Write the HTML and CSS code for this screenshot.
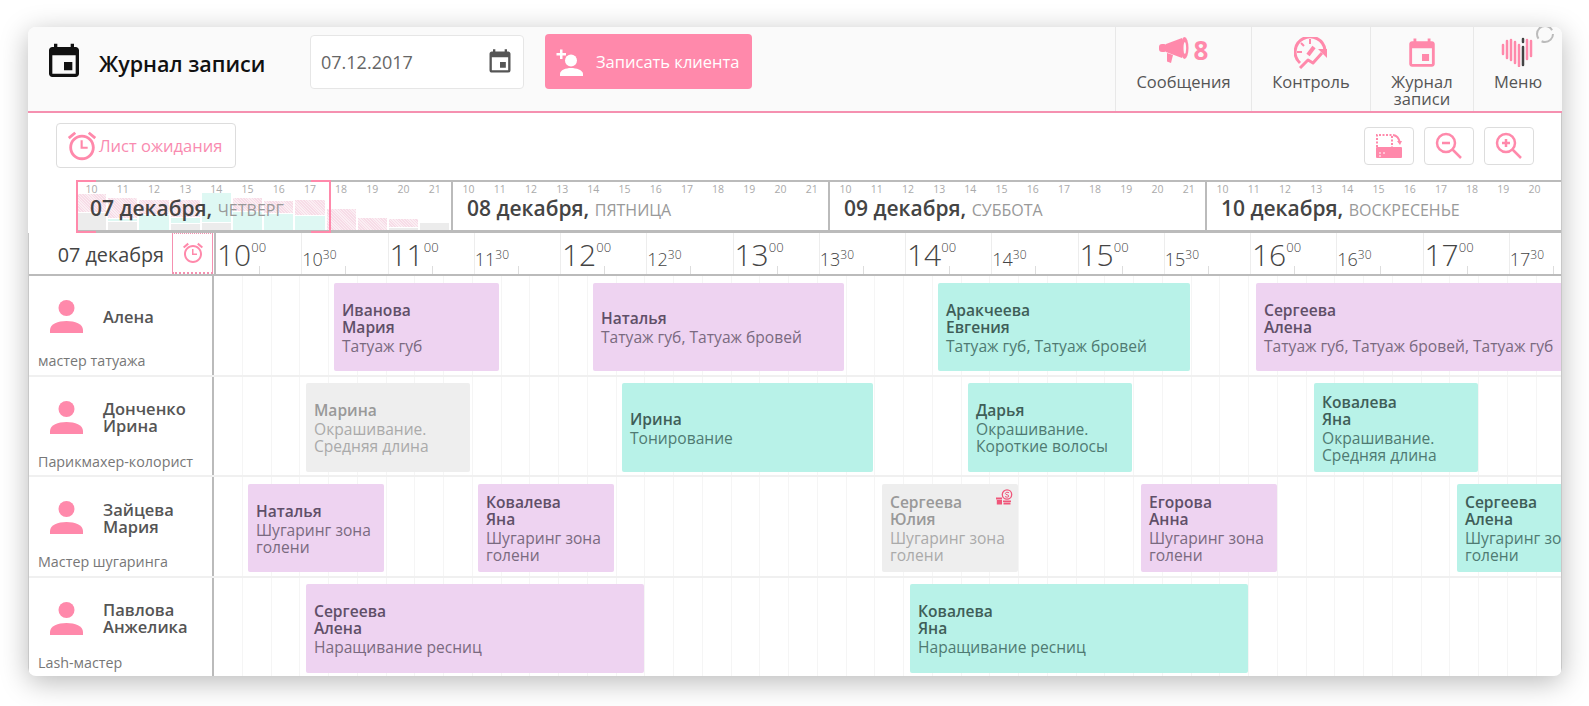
FILE: index.html
```html
<!DOCTYPE html>
<html lang="ru">
<head>
    <meta charset="UTF-8">
    <title>Журнал записи</title>
    <link rel="stylesheet" href="styles.css">
</head>
<body>
<svg class="icon-defs" width="0" height="0">
    <symbol id="i-event" viewBox="0 0 24 24"><path d="M17 12h-5v5h5v-5zM16 1v2H8V1H6v2H5c-1.11 0-1.99.9-1.99 2L3 19c0 1.1.89 2 2 2h14c1.1 0 2-.9 2-2V5c0-1.1-.9-2-2-2h-1V1h-2zm3 18H5V8h14v11z"/></symbol>
    <symbol id="i-alarm" viewBox="0 0 24 24"><path d="M22 5.72l-4.6-3.86-1.29 1.53 4.6 3.86L22 5.72zM7.88 3.39L6.6 1.86 2 5.71l1.29 1.53 4.59-3.85zM12.5 8H11v6h5v-1.5h-3.5V8zM12 4c-4.97 0-9 4.03-9 9s4.03 9 9 9c4.97 0 9-4.03 9-9s-4.03-9-9-9zm0 16c-3.87 0-7-3.13-7-7s3.13-7 7-7 7 3.13 7 7-3.13 7-7 7z"/></symbol>
    <symbol id="i-person" viewBox="0 0 33 33"><circle cx="16.5" cy="8" r="8"/><path d="M0 33v-3c0-6 8-9 16.500-9S33 24 33 30v3z"/></symbol>
</svg>

<div class="app-window">
    <!-- Шапка -->
    <header class="top-bar">
        <svg class="title-icon"><use href="#i-event"/></svg>
        <div class="page-title">Журнал записи</div>
        <div class="date-input">
            <span>07.12.2017</span>
            <svg class="date-icon"><use href="#i-event"/></svg>
        </div>
        <button class="add-client-btn">
            <svg width="28" height="28" viewBox="0 0 28 28" fill="#fff">
                <path d="M4 1.500h2.500v3.500h3.500v2.500H6.500v3.500H4V7.500H.5V5H4z"/>
                <circle cx="15" cy="12.500" r="6"/>
                <path d="M4 28v-2c0-4 6-6 11-6s12 2 12 6v2z"/>
            </svg>
            <span>Записать клиента</span>
        </button>
        <nav class="top-menu">
            <a class="menu-item menu-messages">
                <span class="menu-icon">
                    <svg width="30" height="26" viewBox="0 0 30 26" fill="#ff89ab">
                        <rect x="0" y="7" width="8" height="8" rx="3"/>
                        <path d="M7 7L23 1v20L7 15z"/>
                        <path d="M8 16l6 2-2 8-4-1.500z"/>
                        <ellipse cx="25.500" cy="11" rx="4" ry="11"/>
                        <ellipse cx="25.800" cy="11" rx="1.300" ry="6" fill="#fafafa"/>
                    </svg>
                    <b class="msg-count">8</b>
                </span>
                Сообщения
            </a>
            <a class="menu-item menu-control">
                <span class="menu-icon">
                    <svg width="34" height="32" viewBox="0 0 34 32" fill="none" stroke="#ff89ab" stroke-width="3">
                        <path d="M6 26A15 15 0 1 1 31 13"/>
                        <path d="M16 2v5M3 15h5M7 6l3 3" stroke-width="2"/>
                        <path d="M14 18l6-8" stroke-width="4"/>
                        <path d="M6 31l8-8 5 3 9-10" stroke-linejoin="round"/>
                        <path d="M24 12h9v9z" fill="#ff89ab" stroke="none"/>
                    </svg>
                </span>
                Контроль
            </a>
            <a class="menu-item menu-journal">
                <span class="menu-icon">
                    <svg class="journal-icon"><use href="#i-event"/></svg>
                </span>
                Журнал<br>записи
            </a>
            <a class="menu-item menu-main">
                <span class="menu-icon">
                    <svg width="34" height="30" viewBox="0 0 34 30" fill="none" stroke="#ff89ab" stroke-width="2.500" stroke-linecap="round">
                        <path d="M2 8v9M6 4v17M10 3v20M14 5v21M18 8v21M26 3v19M30 4v15"/>
                        <path d="M22 10v18M22 2v3" stroke="#444"/>
                    </svg>
                </span>
                Меню
            </a>
        </nav>
        <svg class="spinner" width="20" height="20" viewBox="0 0 20 20" fill="none" stroke="#bbb" stroke-width="2">
            <circle cx="10" cy="10" r="8" stroke-dasharray="16 4 26 4"/>
        </svg>
    </header>

    <main class="main-area">
        <!-- Панель инструментов -->
        <div class="toolbar">
            <button class="waiting-btn">
                <svg class="waiting-icon"><use href="#i-alarm"/></svg>
                Лист ожидания
            </button>
            <div class="tool-group">
                <button class="tool-btn">
                    <svg width="26" height="26" viewBox="0 0 26 26" fill="none" stroke="#ff89ab">
                        <path d="M1 14V2h15v12" stroke-width="2" stroke-dasharray="2 1.500"/>
                        <path d="M17 2c4 .5 6 3 7 8" stroke-width="2"/>
                        <path d="M21 8h5l-2 4z" fill="#ff89ab" stroke="none"/>
                        <rect x="0" y="14" width="26" height="11" rx="1" fill="#ff89ab" stroke="none"/>
                        <path d="M3 20h2M7 20h2M3 23h2" stroke="#fff" stroke-width="1"/>
                    </svg>
                </button>
                <button class="tool-btn">
                    <svg width="28" height="28" viewBox="0 0 28 28" fill="none" stroke="#ff89ab" stroke-width="2.500">
                        <circle cx="11" cy="11" r="9"/>
                        <path d="M17.500 17.500L26 26M7 11h8"/>
                    </svg>
                </button>
                <button class="tool-btn">
                    <svg width="28" height="28" viewBox="0 0 28 28" fill="none" stroke="#ff89ab" stroke-width="2.500">
                        <circle cx="11" cy="11" r="9"/>
                        <path d="M17.500 17.500L26 26M7 11h8M11 7v8"/>
                    </svg>
                </button>
            </div>
        </div>

        <!-- Полоса дней -->
        <div class="day-strip">
            <div class="day-card">
                <div class="day-bars">
                    <div class="bar-col"><i class="seg-pink" style="height:18px"></i><i class="seg-grey" style="height:17px"></i></div>
                    <div class="bar-col"><i class="seg-pink" style="height:20px"></i><i class="seg-teal" style="height:2px"></i><i class="seg-grey" style="height:8px"></i></div>
                    <div class="bar-col"><i class="seg-pink" style="height:14px"></i><i class="seg-teal" style="height:15px"></i></div>
                    <div class="bar-col"><i class="seg-pink" style="height:17px"></i><i class="seg-teal" style="height:5px"></i><i class="seg-grey" style="height:6px"></i></div>
                    <div class="bar-col"><i class="seg-teal" style="height:29px"></i><i class="seg-grey" style="height:7px"></i></div>
                    <div class="bar-col"><i class="seg-pink" style="height:13px"></i><i class="seg-teal" style="height:18px"></i></div>
                    <div class="bar-col"><i class="seg-pink" style="height:12px"></i><i class="seg-teal" style="height:16px"></i></div>
                    <div class="bar-col"><i class="seg-pink" style="height:15px"></i><i class="seg-teal" style="height:14px"></i></div>
                    <div class="bar-col"><i class="seg-pink" style="height:21px"></i></div>
                    <div class="bar-col"><i class="seg-pink" style="height:12px"></i></div>
                    <div class="bar-col"><i class="seg-pink" style="height:8px"></i><i class="seg-grey" style="height:2px"></i></div>
                    <div class="bar-col"><i class="seg-grey" style="height:7px"></i></div>
                </div>
                <div class="day-select"></div>
                <div class="day-hours"><span>10</span><span>11</span><span>12</span><span>13</span><span>14</span><span>15</span><span>16</span><span>17</span><span>18</span><span>19</span><span>20</span><span>21</span></div>
                <div class="day-title">07 декабря, <small>четверг</small></div>
            </div>
            <div class="day-card">
                <div class="day-hours"><span>10</span><span>11</span><span>12</span><span>13</span><span>14</span><span>15</span><span>16</span><span>17</span><span>18</span><span>19</span><span>20</span><span>21</span></div>
                <div class="day-title">08 декабря, <small>пятница</small></div>
            </div>
            <div class="day-card">
                <div class="day-hours"><span>10</span><span>11</span><span>12</span><span>13</span><span>14</span><span>15</span><span>16</span><span>17</span><span>18</span><span>19</span><span>20</span><span>21</span></div>
                <div class="day-title">09 декабря, <small>суббота</small></div>
            </div>
            <div class="day-card">
                <div class="day-hours"><span>10</span><span>11</span><span>12</span><span>13</span><span>14</span><span>15</span><span>16</span><span>17</span><span>18</span><span>19</span><span>20</span></div>
                <div class="day-title">10 декабря, <small>воскресенье</small></div>
            </div>
        </div>

        <div class="schedule">
            <!-- Шкала времени -->
            <div class="time-head">
                <div class="time-date">07 декабря</div>
                <div class="time-alarm"><svg class="time-alarm-icon"><use href="#i-alarm"/></svg></div>
                <div class="time-scale">
                    <div class="slot slot-hour">10<sup>00</sup></div><div class="slot">10<sup>30</sup></div>
                    <div class="slot slot-hour">11<sup>00</sup></div><div class="slot">11<sup>30</sup></div>
                    <div class="slot slot-hour">12<sup>00</sup></div><div class="slot">12<sup>30</sup></div>
                    <div class="slot slot-hour">13<sup>00</sup></div><div class="slot">13<sup>30</sup></div>
                    <div class="slot slot-hour">14<sup>00</sup></div><div class="slot">14<sup>30</sup></div>
                    <div class="slot slot-hour">15<sup>00</sup></div><div class="slot">15<sup>30</sup></div>
                    <div class="slot slot-hour">16<sup>00</sup></div><div class="slot">16<sup>30</sup></div>
                    <div class="slot slot-hour">17<sup>00</sup></div><div class="slot">17<sup>30</sup></div>
                </div>
            </div>

            <!-- Мастера и записи -->
            <div class="staff-row">
                <div class="staff-cell">
                    <div class="staff-head">
                        <svg class="staff-icon"><use href="#i-person"/></svg>
                        <div class="staff-name">Алена</div>
                    </div>
                    <div class="staff-role">мастер татуажа</div>
                </div>
                <div class="lane">
                    <div class="event event-lilac" style="left:120px;width:165px"><b>Иванова<br>Мария</b>Татуаж губ</div>
                    <div class="event event-lilac" style="left:379px;width:251px"><b>Наталья</b>Татуаж губ, Татуаж бровей</div>
                    <div class="event event-teal" style="left:724px;width:252px"><b>Аракчеева<br>Евгения</b>Татуаж губ, Татуаж бровей</div>
                    <div class="event event-lilac" style="left:1042px;width:320px"><b>Сергеева<br>Алена</b>Татуаж губ, Татуаж бровей, Татуаж губ</div>
                </div>
            </div>
            <div class="staff-row">
                <div class="staff-cell">
                    <div class="staff-head">
                        <svg class="staff-icon"><use href="#i-person"/></svg>
                        <div class="staff-name">Донченко<br>Ирина</div>
                    </div>
                    <div class="staff-role">Парикмахер-колорист</div>
                </div>
                <div class="lane">
                    <div class="event event-grey" style="left:92px;width:164px"><b>Марина</b>Окрашивание.<br>Средняя длина</div>
                    <div class="event event-teal" style="left:408px;width:251px"><b>Ирина</b>Тонирование</div>
                    <div class="event event-teal" style="left:754px;width:164px"><b>Дарья</b>Окрашивание.<br>Короткие волосы</div>
                    <div class="event event-teal" style="left:1100px;width:164px"><b>Ковалева<br>Яна</b>Окрашивание.<br>Средняя длина</div>
                </div>
            </div>
            <div class="staff-row">
                <div class="staff-cell">
                    <div class="staff-head">
                        <svg class="staff-icon"><use href="#i-person"/></svg>
                        <div class="staff-name">Зайцева<br>Мария</div>
                    </div>
                    <div class="staff-role">Мастер шугаринга</div>
                </div>
                <div class="lane">
                    <div class="event event-lilac" style="left:34px;width:136px"><b>Наталья</b>Шугаринг зона голени</div>
                    <div class="event event-lilac" style="left:264px;width:136px"><b>Ковалева<br>Яна</b>Шугаринг зона голени</div>
                    <div class="event event-grey" style="left:668px;width:136px">
                        <b>Сергеева<br>Юлия</b>Шугаринг зона голени
                        <svg class="gift-icon" width="17" height="16" viewBox="0 0 17 16" fill="#f0567a">
                            <circle cx="11" cy="5.500" r="4.700" fill="#eee" stroke="#f0567a" stroke-width="1.300"/>
                            <path d="M13 3.800c-1-.8-3.600-.8-3.600.7s3.400 1 3.400 2.500-2.800 1.400-3.800.5" fill="none" stroke="#f0567a" stroke-width="1"/>
                            <path d="M0 8.500h6v2H0zM.8 11h5.200v4.500H.8zM7 11.500h8V13H7zM7.500 13.500h7v2h-7z"/>
                        </svg>
                    </div>
                    <div class="event event-lilac" style="left:927px;width:136px"><b>Егорова<br>Анна</b>Шугаринг зона голени</div>
                    <div class="event event-teal" style="left:1243px;width:136px"><b>Сергеева<br>Алена</b>Шугаринг зона голени</div>
                </div>
            </div>
            <div class="staff-row">
                <div class="staff-cell">
                    <div class="staff-head">
                        <svg class="staff-icon"><use href="#i-person"/></svg>
                        <div class="staff-name">Павлова<br>Анжелика</div>
                    </div>
                    <div class="staff-role">Lash-мастер</div>
                </div>
                <div class="lane">
                    <div class="event event-lilac" style="left:92px;width:338px"><b>Сергеева<br>Алена</b>Наращивание ресниц</div>
                    <div class="event event-teal" style="left:696px;width:338px"><b>Ковалева<br>Яна</b>Наращивание ресниц</div>
                </div>
            </div>
        </div>
    </main>
</div>
</body>
</html>
```

FILE: styles.css
```css
:root {
    --pink: #ff89ab;
    --pink-line: #f590b0;
    --grid-line: #bbbbbb;
    --text: #444;
}

* {
    box-sizing: border-box;
}

body {
    margin: 0;
    background-color: #fff;
    font-family: 'Open Sans', 'Noto Sans', sans-serif;
    color: var(--text);
    height: 706px;
    overflow: hidden;
}

.icon-defs {
    position: absolute;
}

.app-window {
    position: relative;
    width: 1534px;
    height: 649px;
    margin: 27px 0 0 28px;
    border-radius: 8px;
    overflow: hidden;
    background-color: #fff;
    box-shadow: 0 6px 28px rgba(0, 0, 0, 0.28);
}

/* Шапка */
.top-bar {
    display: flex;
    align-items: center;
    height: 86px;
    padding-left: 16px;
    background-color: #fafafa;
    border-bottom: 2px solid var(--pink-line);
}

.title-icon {
    width: 40px;
    height: 40px;
    margin-top: -14px;
    fill: #111;
}

.page-title {
    width: 211px;
    margin-left: 15px;
    margin-top: -11px;
    font-size: 21.500px;
    font-weight: 600;
    color: #111;
    white-space: nowrap;
}

.date-input {
    display: flex;
    justify-content: space-between;
    align-items: center;
    width: 214px;
    height: 54px;
    margin-top: -14px;
    padding: 0 9px 0 10px;
    background-color: #fff;
    border: 1px solid #e6e6e6;
    border-radius: 4px;
    font-size: 18px;
    color: #666;
}

.date-icon {
    width: 28px;
    height: 28px;
    fill: #555;
}

.add-client-btn {
    display: flex;
    align-items: center;
    gap: 12px;
    width: 207px;
    height: 55px;
    margin-left: 21px;
    margin-top: -15px;
    padding: 0 0 0 11px;
    background-color: var(--pink);
    border: none;
    border-radius: 4px;
    font-family: inherit;
    font-size: 16.500px;
    color: #fff;
}

.top-menu {
    display: flex;
    height: 84px;
    margin-left: auto;
}

.menu-item {
    display: block;
    padding-top: 10px;
    border-left: 1px solid #e8e8e8;
    font-size: 16.500px;
    line-height: 17px;
    text-align: center;
    color: #555;
}

.menu-messages { width: 136px; }
.menu-control { width: 119px; }
.menu-journal { width: 103px; }
.menu-main { width: 89px; }

.menu-icon {
    display: flex;
    justify-content: center;
    align-items: flex-start;
    gap: 5px;
    height: 36px;
}

.msg-count {
    font-size: 26px;
    line-height: 26px;
    color: var(--pink);
}

.journal-icon {
    width: 34px;
    height: 34px;
    fill: var(--pink);
}

.spinner {
    position: absolute;
    top: -3px;
    right: 7px;
}

/* Панель инструментов */
.main-area {
    border-right: 1px solid #c8c8c8;
}

.toolbar {
    display: flex;
    justify-content: space-between;
    align-items: flex-start;
    height: 67px;
    padding: 10px 27px 0 28px;
}

.waiting-btn {
    display: flex;
    align-items: center;
    width: 180px;
    height: 45px;
    padding: 0 0 0 8px;
    background-color: #fff;
    border: 1px solid #ddd;
    border-radius: 4px;
    font-family: inherit;
    font-size: 16.500px;
    color: #f98bb0;
}

.waiting-icon {
    width: 34px;
    height: 34px;
    fill: var(--pink);
}

.tool-group {
    display: flex;
    gap: 10px;
    margin-top: 4px;
}

.tool-btn {
    display: flex;
    justify-content: center;
    align-items: center;
    width: 50px;
    height: 38px;
    padding: 0;
    background-color: #fff;
    border: 1px solid #ddd;
    border-radius: 4px;
}

/* Полоса дней */
.day-strip {
    display: flex;
    height: 53px;
    margin-left: 48px;
    border-top: 2px solid var(--grid-line);
    border-bottom: 3px solid var(--grid-line);
}

.day-card {
    position: relative;
    flex: 0 0 377px;
    min-width: 0;
    border-right: 2px solid var(--grid-line);
}

.day-hours {
    position: relative;
    display: flex;
    padding-top: 1px;
    font-size: 10.500px;
    line-height: 13px;
    color: #aaa;
}

.day-hours span {
    flex: 0 0 31.200px;
    text-align: center;
}

.day-title {
    position: relative;
    padding: 0 0 0 14px;
    font-size: 21px;
    line-height: 25px;
    font-weight: 600;
    white-space: nowrap;
}

.day-title small {
    font-size: 16px;
    font-weight: 400;
    text-transform: uppercase;
    color: #999;
}

.day-bars {
    position: absolute;
    left: 0;
    right: 0;
    bottom: 0;
    display: flex;
}

.bar-col {
    display: flex;
    flex-direction: column;
    justify-content: flex-end;
    gap: 1px;
    width: 31.200px;
    padding: 0 1px;
}

.bar-col i {
    display: block;
}

.seg-pink {
    background: repeating-linear-gradient(45deg, #f7dce7, #f7dce7 1px, #fbeef3 1px, #fbeef3 2px);
}

.seg-teal {
    background-color: #def8f3;
}

.seg-grey {
    background-color: #ececec;
}

/* Рамка выбранного диапазона */
.day-select {
    position: absolute;
    top: -2px;
    bottom: -3px;
    left: 0;
    width: 255px;
    border-left: 2px solid var(--pink);
    border-right: 2px solid var(--pink);
    z-index: 2;
}

.day-select::before,
.day-select::after {
    content: '';
    position: absolute;
    left: 0;
    right: 0;
    height: 2px;
    background: linear-gradient(90deg, var(--pink) 18px, transparent 18px, transparent calc(100% - 18px), var(--pink) calc(100% - 18px));
}

.day-select::before {
    top: 0;
}

.day-select::after {
    bottom: 0;
}

/* Шкала времени */
.schedule {
    border-left: 1px solid #c8c8c8;
}

.time-head {
    display: flex;
    height: 43px;
    border-bottom: 2px solid var(--grid-line);
}

.time-date {
    width: 143px;
    padding-right: 8px;
    font-size: 19.800px;
    font-weight: 500;
    line-height: 44px;
    text-align: right;
    white-space: nowrap;
}

.time-alarm {
    display: flex;
    justify-content: center;
    align-items: center;
    width: 41px;
    margin-right: 1px;
    border: 1px solid var(--pink-line);
    border-top-style: dotted;
    border-bottom-style: dotted;
    border-bottom-width: 2px;
}

.time-alarm-icon {
    width: 24px;
    height: 24px;
    fill: var(--pink);
}

.time-scale {
    display: flex;
    flex: 1;
    overflow: hidden;
    border-left: 2px solid var(--grid-line);
}

.slot {
    position: relative;
    flex: 0 0 86.250px;
    padding: 13px 0 0 0;
    border-right: 1px solid #ededed;
    font-size: 18px;
    line-height: 26px;
    font-weight: 300;
    color: #444;
    white-space: nowrap;
}

.slot-hour {
    padding: 3px 0 0 1px;
    font-size: 30px;
    line-height: 38px;
}

.slot sup {
    position: relative;
    top: -7px;
    font-size: 12px;
    line-height: 0;
    vertical-align: baseline;
}

.slot-hour sup {
    top: -14px;
    font-size: 13px;
}

.slot::after {
    content: '';
    position: absolute;
    left: 43px;
    bottom: 0;
    width: 1px;
    height: 8px;
    background-color: #ddd;
}

/* Строки мастеров */
.staff-row {
    display: flex;
    height: 100.500px;
    border-bottom: 2px solid #f0f0f0;
}

.staff-cell {
    flex: 0 0 185px;
    padding: 24px 0 0 21px;
    border-right: 2px solid var(--grid-line);
}

.staff-head {
    display: flex;
    align-items: center;
    gap: 20px;
    height: 33px;
}

.staff-icon {
    flex: 0 0 33px;
    width: 33px;
    height: 33px;
    fill: var(--pink);
}

.staff-name {
    font-size: 16.500px;
    line-height: 17px;
    font-weight: 600;
    color: #555;
    white-space: nowrap;
}

.staff-role {
    margin: 19px 0 0 -12px;
    font-size: 14.300px;
    line-height: 18px;
    color: #777;
    white-space: nowrap;
}

.lane {
    position: relative;
    flex: 1;
    overflow: hidden;
    background: repeating-linear-gradient(90deg, transparent, transparent 27.750px, #f5f5f5 27.750px, #f5f5f5 28.750px);
}

.event {
    position: absolute;
    top: 6.500px;
    height: 88.500px;
    display: flex;
    flex-direction: column;
    justify-content: center;
    padding: 3px 8px 0;
    border-radius: 2px;
    font-size: 15.600px;
    line-height: 17px;
}

.event b {
    font-weight: 600;
    margin-bottom: 2px;
}

.event-lilac {
    background-color: #eed3f1;
    color: #7a6a80;
}

.event-lilac b {
    color: #5f4f68;
}

.event-teal {
    background-color: #b8f2e8;
    color: #4f7a72;
}

.event-teal b {
    color: #3f5e58;
}

.event-grey {
    background-color: #eeeeee;
    color: #aaa;
}

.event-grey b {
    color: #999;
}

.gift-icon {
    position: absolute;
    top: 5px;
    right: 5px;
}
```
